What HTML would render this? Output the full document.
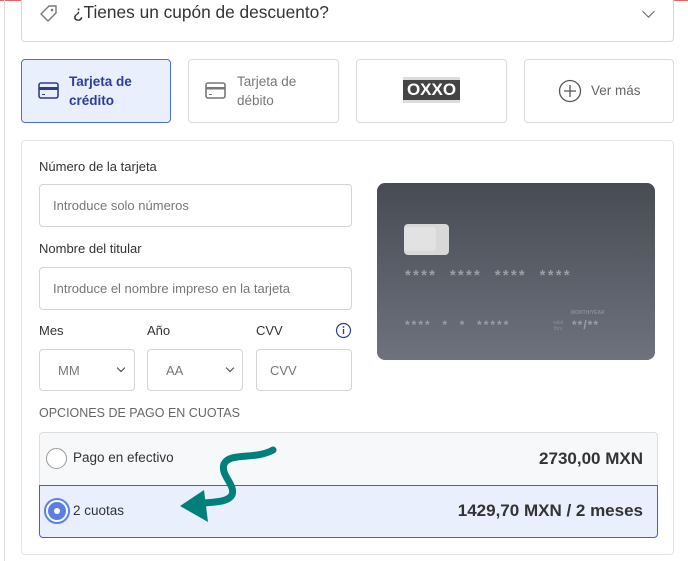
<!DOCTYPE html>
<html><head><meta charset="utf-8"><style>
*{box-sizing:border-box;margin:0;padding:0}
body{width:688px;height:561px;overflow:hidden;background:#fff;font-family:"Liberation Sans",sans-serif;position:relative;color:#333}
.a{position:absolute}
.box{position:absolute;border:1px solid #dcdcdc;border-radius:4px;background:#fff}
.lbl{position:absolute;font-size:13px;color:#333}
.inp{position:absolute;border:1px solid #d4d4d4;border-radius:4px;background:#fff;font-size:13px;color:#777;padding-left:13px;display:flex;align-items:center}
.chev{position:absolute;width:7px;height:7px;border-right:1.6px solid #444;border-bottom:1.6px solid #444;transform:rotate(45deg)}
.ast{position:absolute;font-size:15px;color:#9a9ea6;font-weight:bold;white-space:pre}
</style></head><body>
<div class="a" style="left:0;top:0;width:688px;height:1px;background:#f06060"></div>
<div class="a" style="left:4px;top:0;width:1px;height:561px;background:#e0e0e0"></div>
<div class="box" style="left:21px;top:-6px;width:653px;height:48px;border-color:#d8d8d8"></div>
<svg class="a" style="left:38px;top:3px" width="22" height="22" viewBox="0 0 22 22"><path d="M11 3h7v7l-8 8-7-7z" fill="none" stroke="#777" stroke-width="1.4" stroke-linejoin="round"/><circle cx="14" cy="7" r="1.3" fill="#777"/></svg>
<div class="a" style="left:73px;top:2px;font-size:17.3px;color:#333">¿Tienes un cupón de descuento?</div>
<div class="chev" style="left:644px;top:7px;border-color:#666;width:9px;height:9px;border-width:1.3px"></div>

<div class="box" style="left:21px;top:59px;width:150px;height:64px;background:#e9effc;border-color:#4c6fd6"></div>
<svg class="a" style="left:38px;top:82px" width="21" height="17"><rect x="1" y="1" width="19" height="15" rx="2" fill="none" stroke="#2f3f8f" stroke-width="1.6"/><rect x="1" y="5" width="19" height="3" fill="#2f3f8f"/><rect x="4" y="12" width="3" height="1" fill="#2f3f8f"/></svg>
<div class="a" style="left:69px;top:72px;font-size:13.5px;font-weight:bold;color:#2c3e9a;line-height:19px">Tarjeta de<br>crédito</div>
<div class="box" style="left:188px;top:59px;width:151px;height:64px"></div>
<svg class="a" style="left:205px;top:82px" width="21" height="17"><rect x="1" y="1" width="19" height="15" rx="2" fill="none" stroke="#777" stroke-width="1.6"/><rect x="1" y="5" width="19" height="2.5" fill="#777"/><rect x="4" y="12" width="3" height="1" fill="#777"/></svg>
<div class="a" style="left:237px;top:72px;font-size:13.5px;color:#777;line-height:19px">Tarjeta de<br>débito</div>
<div class="box" style="left:356px;top:59px;width:151px;height:64px"></div>
<div class="a" style="left:403px;top:77px;width:57px;height:26px;background:#dcdcdc"></div>
<div class="a" style="left:403px;top:80px;width:57px;height:20px;background:#444;color:#fff;font-weight:bold;font-size:17px;text-align:center;line-height:20px">OXXO</div>
<div class="box" style="left:524px;top:59px;width:150px;height:64px"></div>
<svg class="a" style="left:558px;top:79px" width="24" height="24"><circle cx="12" cy="12" r="10.5" fill="none" stroke="#555" stroke-width="1.3"/><path d="M12 6v12M6 12h12" stroke="#555" stroke-width="1.3"/></svg>
<div class="a" style="left:591px;top:83px;font-size:13.5px;color:#666">Ver más</div>

<div class="box" style="left:21px;top:140px;width:653px;height:415px;border-color:#e4e4e4"></div>
<div class="lbl" style="left:39px;top:159px">Número de la tarjeta</div>
<div class="inp" style="left:39px;top:184px;width:313px;height:43px">Introduce solo números</div>
<div class="lbl" style="left:39px;top:241px">Nombre del titular</div>
<div class="inp" style="left:39px;top:267px;width:313px;height:43px">Introduce el nombre impreso en la tarjeta</div>
<div class="lbl" style="left:39px;top:323px">Mes</div>
<div class="lbl" style="left:147px;top:323px">Año</div>
<div class="lbl" style="left:256px;top:323px">CVV</div>
<svg class="a" style="left:335px;top:322px" width="17" height="17"><circle cx="8.5" cy="8.5" r="7" fill="none" stroke="#2f3f8f" stroke-width="1.2"/><rect x="7.8" y="7" width="1.4" height="5" fill="#2f3f8f"/><circle cx="8.5" cy="5" r="0.9" fill="#2f3f8f"/></svg>
<div class="inp" style="left:39px;top:349px;width:96px;height:42px;padding-left:18px">MM</div>
<div class="chev" style="left:118px;top:365px;width:6px;height:6px"></div>
<div class="inp" style="left:147px;top:349px;width:96px;height:42px;padding-left:18px">AA</div>
<div class="chev" style="left:227px;top:365px;width:6px;height:6px"></div>
<div class="inp" style="left:256px;top:349px;width:96px;height:42px">CVV</div>
<div class="a" style="left:39px;top:406px;font-size:12.5px;color:#666">OPCIONES DE PAGO EN CUOTAS</div>

<div class="a" style="left:377px;top:183px;width:278px;height:177px;border-radius:8px;background:linear-gradient(#474b54,#6d727c)"></div>
<div class="a" style="left:404px;top:224px;width:45px;height:31px;border-radius:4px;background:#d8d8d8"></div>
<div class="a" style="left:404px;top:227px;width:32px;height:24px;border-radius:3px;background:#e2e2e2"></div>
<div class="ast" style="left:405px;top:267px;letter-spacing:2.2px">****  ****  ****  ****</div>
<div class="ast" style="left:405px;top:318px;font-size:12px;letter-spacing:2px">****  *  *  *****</div>
<div class="a" style="left:571px;top:310px;font-size:5px;color:#8a8e96;font-weight:bold">MONTH/YEAR</div>
<div class="a" style="left:553px;top:320px;font-size:5px;color:#8a8e96;line-height:6px;text-align:center">valid<br>thru</div>
<div class="ast" style="left:572px;top:318px;font-size:12px;letter-spacing:1px">**/**</div>

<div class="a" style="left:39px;top:432px;width:619px;height:54px;background:#f7f8fa;border:1px solid #ddd;border-radius:4px 4px 0 0"></div>
<div class="a" style="left:46px;top:448px;width:21px;height:21px;border-radius:50%;border:1.5px solid #999;background:#fff"></div>
<div class="a" style="left:73px;top:450px;font-size:13.5px;color:#333">Pago en efectivo</div>
<div class="a" style="right:45px;top:449px;font-size:17px;font-weight:bold;color:#333">2730,00 MXN</div>
<div class="a" style="left:39px;top:485px;width:619px;height:53px;background:#e9effd;border:1.5px solid #4a58e0;border-radius:0 0 4px 4px"></div>
<div class="a" style="left:44px;top:498px;width:26px;height:26px;border-radius:50%;border:2px solid #5b82e8;background:#fff"></div>
<div class="a" style="left:48px;top:502px;width:18px;height:18px;border-radius:50%;background:#5b7ee0"></div>
<div class="a" style="left:54px;top:508px;width:6px;height:6px;border-radius:50%;background:#fff"></div>
<div class="a" style="left:73px;top:503px;font-size:13.5px;color:#333">2 cuotas</div>
<div class="a" style="right:45px;top:501px;font-size:17px;font-weight:bold;color:#333">1429,70 MXN / 2 meses</div>

<svg class="a" style="left:0;top:0" width="688" height="561"><path d="M273 450 C255 460 230 452 224 464 C220 475 236 485 232 495 C228 502 215 502 204 503" fill="none" stroke="#00807a" stroke-width="7" stroke-linecap="round"/><path d="M180 506 L204 490 L208 522 Z" fill="#00807a"/></svg>
</body></html>
